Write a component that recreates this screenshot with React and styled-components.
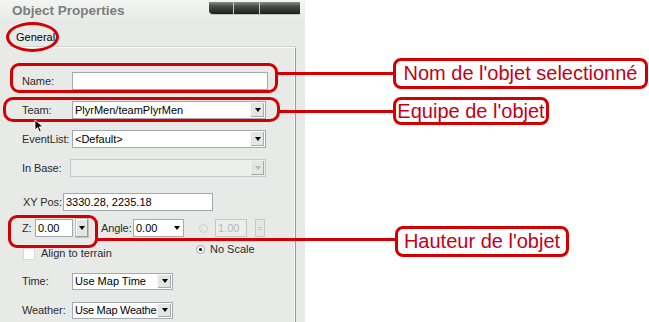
import styled, { createGlobalStyle } from "styled-components";

const GlobalStyle = createGlobalStyle`
  html, body {
    margin: 0;
    padding: 0;
    background: #ffffff;
  }
  body {
    font-family: "Liberation Sans", Arial, sans-serif;
  }
`;

const RED = "#d40000";

const Page = styled.div`
  position: relative;
  width: 649px;
  height: 322px;
  overflow: hidden;
  display: flex;
  background: #ffffff;
`;

const Panel = styled.div`
  width: 305px;
  height: 322px;
  display: flex;
  flex-direction: column;
  background: #e8eae8;
  padding-right: 9px;
  box-sizing: border-box;
`;

const TitleBar = styled.div`
  height: 22px;
  display: flex;
  justify-content: space-between;
  padding-left: 12px;
  margin-right: -9px;
  background: linear-gradient(#f3f4f3, #e8eae8);
`;

const Title = styled.h1`
  margin: 0;
  font-size: 13.5px;
  line-height: 22px;
  font-weight: bold;
  color: #7c7e7c;
`;

const WinButtons = styled.div`
  display: flex;
  margin-top: 2px;
  margin-right: 5px;
  height: 12px;
  border-bottom-left-radius: 4px;
  overflow: hidden;
  box-shadow: 0 1px 0 #bfc2bf;
`;

const WinButton = styled.div`
  width: ${(p) => p.$w}px;
  height: 12px;
  background: linear-gradient(#8a8c8a 0%, #4a4c4a 35%, #1e1f1e 100%);
  border-left: 1px solid #c8cac8;
  &:first-child {
    border-left: none;
  }
`;

const TabRow = styled.div`
  height: 25px;
  display: flex;
  align-items: center;
  padding-left: 16px;
  padding-top: 4px;
  box-sizing: border-box;
`;

const TabLabel = styled.span`
  font-size: 11px;
  color: #000;
`;

const GroupBox = styled.div`
  flex: 1;
  margin-left: 9px;
  border-top: 1px solid #fbfbfb;
  border-right: 1px solid #9a9c9a;
  box-shadow: 0 -1px 0 #cfd1cf, inset -1px 0 0 #f8f8f8;
  display: flex;
  flex-direction: column;
  padding: 23px 0 0 13px;
`;

const Row = styled.div`
  display: flex;
  align-items: ${(p) => (p.$top ? "flex-start" : "center")};
  height: ${(p) => p.$h || 20}px;
  margin-top: ${(p) => p.$mt || 0}px;
`;

const Label = styled.span`
  width: ${(p) => p.$w}px;
  flex-shrink: 0;
  margin-left: ${(p) => p.$ml || 0}px;
  box-sizing: border-box;
  font-size: 11px;
  letter-spacing: -0.1px;
  color: #2c2c2c;
  white-space: nowrap;
`;

const TextBox = styled.div`
  width: ${(p) => p.$w}px;
  height: 18px;
  flex-shrink: 0;
  margin-left: ${(p) => p.$ml || 0}px;
  box-sizing: border-box;
  border: 1px solid ${(p) => (p.$disabled ? "#c4c8cc" : "#a2a9b1")};
  background: ${(p) => (p.$disabled ? "#eceeec" : "#ffffff")};
  font-size: 11px;
  line-height: 16px;
  padding-left: 2px;
  color: ${(p) => (p.$disabled ? "#b4b6b4" : "#000")};
  white-space: nowrap;
  overflow: hidden;
`;

const ComboBox = styled.div`
  width: ${(p) => p.$w}px;
  height: ${(p) => p.$h || 18}px;
  flex-shrink: 0;
  box-sizing: border-box;
  display: flex;
  align-items: center;
  border: 1px solid ${(p) => (p.$disabled ? "#c4c8cc" : "#a2a9b1")};
  background: ${(p) => (p.$disabled ? "#eceeec" : "#ffffff")};
  padding: 1px;
`;

const ComboText = styled.span`
  flex: 1;
  min-width: 0;
  font-size: 11px;
  letter-spacing: ${(p) => (p.$tight ? "-0.25px" : "normal")};
  padding-left: 1px;
  color: #000;
  white-space: nowrap;
  overflow: hidden;
`;

const DropButton = styled.span`
  width: ${(p) => (p.$flat ? 10 : 14)}px;
  height: 100%;
  flex-shrink: 0;
  display: flex;
  align-items: center;
  justify-content: center;
  box-sizing: border-box;
  background: ${(p) => (p.$flat ? "transparent" : "#e4e6e4")};
  border-left: ${(p) => (p.$flat ? "none" : "1px solid #f6f6f6")};
  box-shadow: ${(p) => (p.$flat ? "none" : "inset -1px -1px 0 #a8aaa8")};
  &::after {
    content: "";
    border-left: 3px solid transparent;
    border-right: 3px solid transparent;
    border-top: 4px solid ${(p) => (p.$disabled ? "#b8bab8" : "#000")};
  }
`;

const SpinButton = styled(DropButton)`
  width: 14px;
  height: 20px;
  margin-left: 2px;
  border: 1px solid #c0c2c0;
  box-shadow: inset -1px -1px 0 #9a9c9a, inset 1px 1px 0 #ffffff;
`;

const SmallButton = styled.span`
  width: 10px;
  height: 18px;
  box-sizing: border-box;
  border: 1px solid #c8cac8;
  background: #e4e6e4;
  margin-left: 8px;
  display: flex;
  align-items: center;
  justify-content: center;
  font-size: 9px;
  color: #b0b2b0;
`;

const Radio = styled.span`
  width: 9px;
  height: 9px;
  flex-shrink: 0;
  margin-left: ${(p) => p.$ml || 0}px;
  border-radius: 50%;
  box-sizing: border-box;
  border: 1px solid ${(p) => (p.$disabled ? "#cfd1cf" : "#a0a2a0")};
  background: ${(p) => (p.$disabled ? "#e8eae8" : "#ffffff")};
  display: flex;
  align-items: center;
  justify-content: center;
  &::after {
    content: "";
    width: 3px;
    height: 3px;
    border-radius: 50%;
    background: ${(p) => (p.$checked ? "#000" : "transparent")};
  }
`;

const Check = styled.span`
  width: 12px;
  height: 12px;
  margin: 6px 6px 0 1px;
  box-sizing: border-box;
  border: 1px solid #d8dad8;
  background: #ffffff;
`;

const Option = styled.div`
  display: flex;
  align-items: center;
  gap: 5px;
  margin-left: ${(p) => p.$ml || 0}px;
  margin-top: ${(p) => p.$mt || 0}px;
  font-size: 11px;
  color: #2c2c2c;
`;

/* annotation layer */

const Ring = styled.div`
  position: absolute;
  left: ${(p) => p.$x}px;
  top: ${(p) => p.$y}px;
  width: ${(p) => p.$w}px;
  height: ${(p) => p.$h}px;
  box-sizing: border-box;
  border: 3px solid ${RED};
  border-radius: ${(p) => p.$r};
`;

const Leader = styled.div`
  position: absolute;
  left: ${(p) => p.$x}px;
  top: ${(p) => p.$y}px;
  width: ${(p) => p.$w}px;
  height: 3px;
  background: ${RED};
`;

const Note = styled.div`
  position: absolute;
  left: ${(p) => p.$x}px;
  top: ${(p) => p.$y}px;
  width: ${(p) => p.$w}px;
  height: ${(p) => p.$h}px;
  box-sizing: border-box;
  border: 3px solid ${RED};
  border-radius: 8px;
  background: #ffffff;
  display: flex;
  align-items: center;
  justify-content: center;
  font-size: 20px;
  color: #c2001a;
  white-space: nowrap;
`;

const Cursor = styled.svg`
  position: absolute;
  left: 34px;
  top: 119px;
`;

export default function App() {
  return (
    <Page>
      <GlobalStyle />
      <Panel>
        <TitleBar>
          <Title>Object Properties</Title>
          <WinButtons>
            <WinButton $w={24} />
            <WinButton $w={25} />
            <WinButton $w={40} />
          </WinButtons>
        </TitleBar>
        <TabRow>
          <TabLabel>General</TabLabel>
        </TabRow>
        <GroupBox>
          <Row>
            <Label $w={50}>Name:</Label>
            <TextBox $w={196} />
          </Row>
          <Row $mt={9}>
            <Label $w={50}>Team:</Label>
            <ComboBox $w={194}>
              <ComboText>PlyrMen/teamPlyrMen</ComboText>
              <DropButton />
            </ComboBox>
          </Row>
          <Row $mt={9}>
            <Label $w={50}>EventList:</Label>
            <ComboBox $w={194}>
              <ComboText>&lt;Default&gt;</ComboText>
              <DropButton />
            </ComboBox>
          </Row>
          <Row $mt={9}>
            <Label $w={48}>In Base:</Label>
            <ComboBox $w={196} $disabled>
              <ComboText />
              <DropButton $disabled />
            </ComboBox>
          </Row>
          <Row $mt={14}>
            <Label $w={40} $ml={1}>XY Pos:</Label>
            <TextBox $w={150}>3330.28, 2235.18</TextBox>
          </Row>
          <Row $mt={6}>
            <Label $w={13}>Z:</Label>
            <TextBox $w={38}>0.00</TextBox>
            <SpinButton />
            <Label $w={32} $ml={12}>Angle:</Label>
            <ComboBox $w={51}>
              <ComboText>0.00</ComboText>
              <DropButton $flat />
            </ComboBox>
            <Radio $disabled $ml={15} />
            <TextBox $w={32} $ml={7} $disabled>
              1.00
            </TextBox>
            <SmallButton>=</SmallButton>
          </Row>
          <Row $mt={4} $h={18} $top>
            <Check />
            <Option $mt={5}>Align to terrain</Option>
            <Option $ml={84} $mt={1}>
              <Radio $checked />
              No Scale
            </Option>
          </Row>
          <Row $mt={11}>
            <Label $w={50}>Time:</Label>
            <ComboBox $w={101} $h={17}>
              <ComboText>Use Map Time</ComboText>
              <DropButton />
            </ComboBox>
          </Row>
          <Row $mt={9}>
            <Label $w={50}>Weather:</Label>
            <ComboBox $w={101} $h={17}>
              <ComboText $tight>Use Map Weathe</ComboText>
              <DropButton />
            </ComboBox>
          </Row>
        </GroupBox>
      </Panel>

      <Ring $x={6} $y={22} $w={53} $h={30} $r="50%" />
      <Ring $x={10} $y={63} $w={268} $h={30} $r="9px" />
      <Ring $x={3} $y={97} $w={277} $h={25} $r="10px" />
      <Ring $x={8} $y={215} $w={90} $h={33} $r="9px" />

      <Leader $x={277} $y={72} $w={118} />
      <Leader $x={279} $y={110} $w={116} />
      <Leader $x={97} $y={238} $w={300} />

      <Note $x={393} $y={58} $w={255} $h={31}>
        Nom de l'objet selectionné
      </Note>
      <Note $x={393} $y={97} $w={156} $h={28}>
        Equipe de l'objet
      </Note>
      <Note $x={395} $y={226} $w={174} $h={31}>
        Hauteur de l'objet
      </Note>

      <Cursor width="11" height="14" viewBox="0 0 11 14">
        <path
          d="M1 1 L1 11 L3.5 8.5 L5.5 13 L7.2 12.2 L5.3 7.8 L9 7.8 Z"
          fill="#000"
          stroke="#fff"
          strokeWidth="0.8"
        />
      </Cursor>
    </Page>
  );
}
